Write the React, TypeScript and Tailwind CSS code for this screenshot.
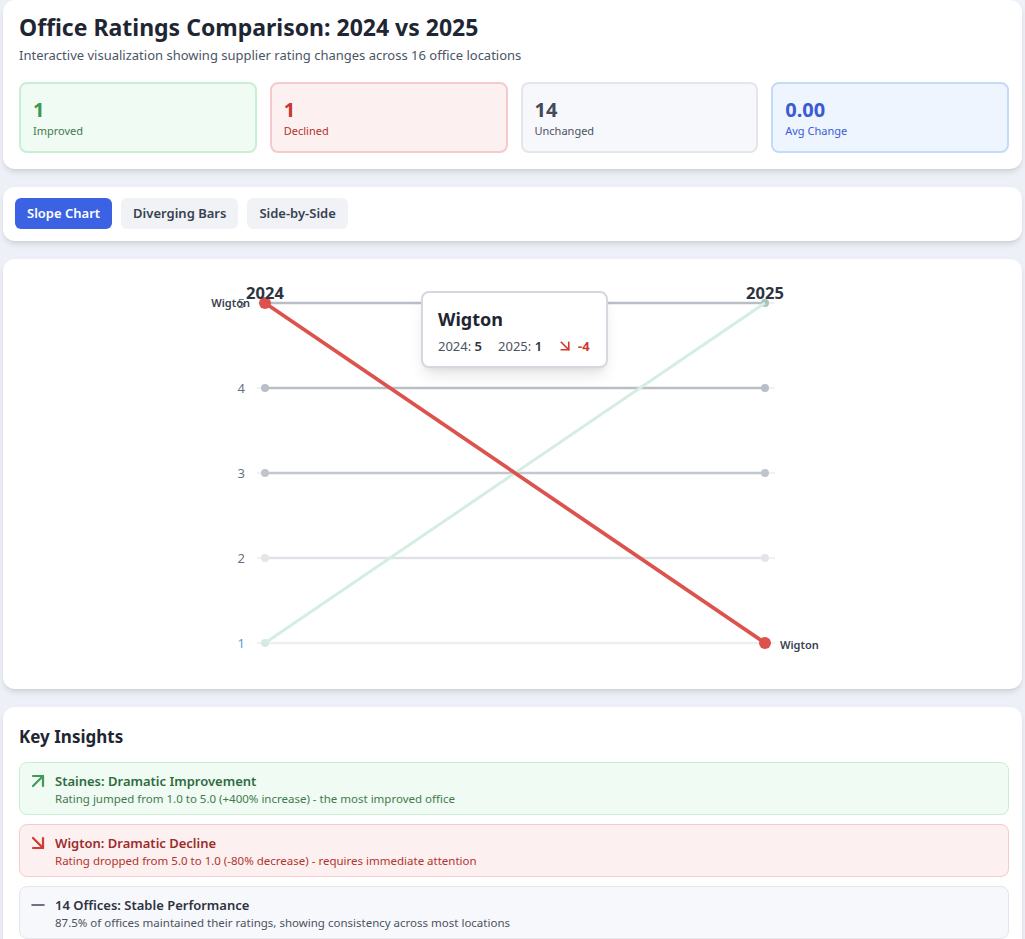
import React from "react";
import { ArrowUpRight, ArrowDownRight, Minus } from "lucide-react";

const FONT = { fontFamily: '"Noto Sans", "Open Sans", sans-serif' };

function Stat({ value, label, box, num, lab }: { value: string; label: string; box: string; num: string; lab: string }) {
  return (
    <div className={`rounded-lg border-2 px-[12px] pt-[14px] pb-[12px] ${box}`}>
      <div className={`text-xl leading-6 font-bold ${num}`}>{value}</div>
      <div className={`text-[11px] leading-4 mt-[1px] ${lab}`}>{label}</div>
    </div>
  );
}

function Insight({ icon, title, desc, box, t, d }: { icon: React.ReactNode; title: string; desc: string; box: string; t: string; d: string }) {
  return (
    <div className={`flex rounded-lg border pl-[10px] pt-[8px] pb-[7px] ${box}`}>
      <div className="w-[16px] h-[20px] mr-[9px] flex items-center justify-center">{icon}</div>
      <div>
        <div className={`text-[13px] leading-5 font-semibold ${t}`}>{title}</div>
        <div className={`text-[11.5px] leading-4 ${d}`}>{desc}</div>
      </div>
    </div>
  );
}

function Chart() {
  const rows = [
    { v: 5, y: 302, line: "#b9bec6", dot: "#b9bfc8", lab: "#6b7280" },
    { v: 4, y: 387, line: "#b9bec6", dot: "#b9bfc8", lab: "#6b7280" },
    { v: 3, y: 472, line: "#c3c8cf", dot: "#c0c5cd", lab: "#6b7280" },
    { v: 2, y: 557, line: "#dfe2e6", dot: "#e3e5e9", lab: "#6b7280" },
    { v: 1, y: 642, line: "#eeeff1", dot: "#d3ebdf", lab: "#5b9bd5" },
  ];
  return (
    <svg width={1020} height={430} viewBox="3 258 1020 430" className="block">
      {rows.map((r) => (
        <g key={r.v}>
          <line x1={257} x2={775} y1={r.y} y2={r.y} stroke="#f0f1f3" strokeWidth={2} />
          <line x1={265} x2={765} y1={r.y} y2={r.y} stroke={r.line} strokeWidth={2.5} />
          <circle cx={265} cy={r.y} r={4} fill={r.dot} />
          <circle cx={765} cy={r.y} r={4} fill={r.v === 5 ? "#a9c4b8" : r.dot} />
          <text x={245} y={r.y + 5} textAnchor="end" fontSize={13} fill={r.lab} style={FONT}>
            {r.v}
          </text>
        </g>
      ))}
      <line x1={265} y1={642} x2={765} y2={302} stroke="#d5eee2" strokeWidth={3} />
      <line x1={265} y1={302} x2={765} y2={642} stroke="#dc524d" strokeWidth={3.75} />
      <circle cx={265} cy={302} r={6} fill="#dc524d" />
      <circle cx={765} cy={642} r={6} fill="#dc524d" />
      <text x={250} y={306} textAnchor="end" fontSize={11} fontWeight={600} fill="#374151" style={FONT}>
        Wigton
      </text>
      <text x={780} y={648} fontSize={11} fontWeight={600} fill="#374151" style={FONT}>
        Wigton
      </text>
      <text x={265} y={298} textAnchor="middle" fontSize={16.5} fontWeight={700} fill="#2d3340" style={FONT}>
        2024
      </text>
      <text x={765} y={298} textAnchor="middle" fontSize={16.5} fontWeight={700} fill="#2d3340" style={FONT}>
        2025
      </text>
    </svg>
  );
}

export default function App() {
  return (
    <div className="min-h-[939px] bg-[#eef0f7] px-[3px] text-gray-800" style={FONT}>
      <div className="flex flex-col gap-[18px]">
        {/* Header */}
        <div className="bg-white rounded-xl shadow-md pl-4 pr-[13px] pt-[11px] pb-4">
          <h1 className="text-[23px] leading-8 font-bold text-[#1f2633]">Office Ratings Comparison: 2024 vs 2025</h1>
          <p className="text-[13px] leading-5 mt-[2px] text-gray-600">
            Interactive visualization showing supplier rating changes across 16 office locations
          </p>
          <div className="grid grid-cols-4 gap-[13px] mt-[17px]">
            <Stat value="1" label="Improved" box="bg-[#f0fbf3] border-[#c8efd3]" num="text-[#3b9a52]" lab="text-[#3f7a4e]" />
            <Stat value="1" label="Declined" box="bg-[#fcf0f0] border-[#f5caca]" num="text-[#c9382f]" lab="text-[#b3342c]" />
            <Stat value="14" label="Unchanged" box="bg-[#f7f8fb] border-[#e4e6ea]" num="text-[#454b57]" lab="text-[#4b5260]" />
            <Stat value="0.00" label="Avg Change" box="bg-[#eef5fe] border-[#c3dbf8]" num="text-[#3b5bd5]" lab="text-[#3b5bd5]" />
          </div>
        </div>

        {/* Tabs */}
        <div className="bg-white rounded-xl shadow-md px-3 pt-[11px] pb-[12px] flex gap-[9px]">
          <button className="h-[31px] px-3 rounded-md bg-[#3b62e3] text-white text-[13px] font-semibold">Slope Chart</button>
          <button className="h-[31px] px-3 rounded-md bg-[#f1f2f5] text-[#374151] text-[13px] font-semibold">Diverging Bars</button>
          <button className="h-[31px] px-3 rounded-md bg-[#f1f2f5] text-[#374151] text-[13px] font-semibold">Side-by-Side</button>
        </div>

        {/* Chart */}
        <div className="relative bg-white rounded-xl shadow-md h-[430px] overflow-hidden">
          <Chart />
          <div className="absolute left-[418px] top-[32px] w-[187px] h-[77px] bg-white border-2 border-[#d5d8de] rounded-lg shadow-lg px-[15px] pt-[12px]">
            <div className="text-lg leading-7 font-bold text-[#1f2633]">Wigton</div>
            <div className="flex items-center mt-[3px] text-[13px] leading-5 text-[#4b5260]">
              <span>
                2024: <b className="font-semibold text-[#2d3340]">5</b>
              </span>
              <span className="ml-4">
                2025: <b className="font-semibold text-[#2d3340]">1</b>
              </span>
              <ArrowDownRight size={18} strokeWidth={2.3} className="ml-[14px] text-[#d03a33]" />
              <span className="ml-[4px] font-bold text-[#d03a33]">-4</span>
            </div>
          </div>
        </div>

        {/* Insights */}
        <div className="bg-white rounded-xl shadow-md pl-4 pr-[13px] pt-4 pb-4">
          <h2 className="text-[17px] leading-7 font-bold text-[#1f2633]">Key Insights</h2>
          <div className="flex flex-col gap-[9px] mt-[11px]">
            <Insight
              icon={<ArrowUpRight size={24} strokeWidth={2.2} className="shrink-0 text-[#3f9a58]" />}
              title="Staines: Dramatic Improvement"
              desc="Rating jumped from 1.0 to 5.0 (+400% increase) - the most improved office"
              box="bg-[#f0fbf3] border-[#c8efd3]"
              t="text-[#2e6b3f]"
              d="text-[#3f7a4e]"
            />
            <Insight
              icon={<ArrowDownRight size={24} strokeWidth={2.2} className="shrink-0 text-[#d03a33]" />}
              title="Wigton: Dramatic Decline"
              desc="Rating dropped from 5.0 to 1.0 (-80% decrease) - requires immediate attention"
              box="bg-[#fcf0f0] border-[#f5caca]"
              t="text-[#9b2c2c]"
              d="text-[#b3342c]"
            />
            <Insight
              icon={<Minus size={20} strokeWidth={2.4} className="shrink-0 text-[#6b7280]" />}
              title="14 Offices: Stable Performance"
              desc="87.5% of offices maintained their ratings, showing consistency across most locations"
              box="bg-[#f7f8fb] border-[#e4e6ea]"
              t="text-[#2d3340]"
              d="text-[#4b5260]"
            />
          </div>
        </div>
      </div>
    </div>
  );
}
